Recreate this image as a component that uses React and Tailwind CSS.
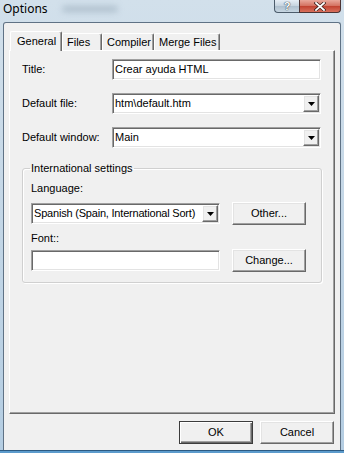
const sunken =
  "bg-white border border-t-[#a0a0a0] border-l-[#a0a0a0] border-r-white border-b-white shadow-[inset_1px_1px_0_#696969,inset_-1px_-1px_0_#e3e3e3]";
const raised =
  "bg-[#f0f0f0] border border-t-white border-l-white border-r-[#696969] border-b-[#696969] shadow-[inset_-1px_-1px_0_#a0a0a0,inset_1px_1px_0_#e3e3e3]";

const DropButton = () => (
  <div className={`${raised} w-[16px] h-full flex items-center justify-center shrink-0`}>
    <svg width="7" height="4" viewBox="0 0 7 4">
      <polygon points="0,0 7,0 3.5,4" fill="#000" />
    </svg>
  </div>
);

const Combo = ({ value, className = "" }) => (
  <div className={`${sunken} h-[21px] p-[1px] flex items-center ${className}`}>
    <span className="flex-1 min-w-0 whitespace-nowrap overflow-hidden pl-[1px]">
      {value}
    </span>
    <DropButton />
  </div>
);

const TextBox = ({ value = "", className = "" }) => (
  <div className={`${sunken} h-[21px] p-[1px] pl-[2px] flex items-center ${className}`}>
    {value}
  </div>
);

const Button = ({ children, isDefault = false }) => (
  <div
    className={`w-[74px] h-[23px] flex items-center justify-center ${
      isDefault
        ? "bg-[#f0f0f0] border border-[#3c3c3c] shadow-[inset_1px_1px_0_#fff,inset_-1px_-1px_0_#696969,inset_-2px_-2px_0_#a0a0a0]"
        : raised
    }`}
  >
    {children}
  </div>
);

const Row = ({ label, children }) => (
  <div className="flex items-center h-[21px]">
    <div className="w-[90px]">{label}</div>
    {children}
  </div>
);

export default function App() {
  const tabs = [
    { name: "Files", w: "w-[40px]" },
    { name: "Compiler", w: "w-[52px]" },
    { name: "Merge Files", w: "w-[66px]" },
  ];

  return (
    <div className="w-[344px] h-[453px] flex flex-col overflow-hidden bg-[linear-gradient(to_bottom,#d2e0eb,#c6d8e7_40%,#b4cde2)] text-[11px] leading-[13px] text-black font-['Liberation_Sans',Arial,sans-serif]">
      {/* title bar */}
      <div className="h-[22px] flex items-start justify-between pl-[3px] pr-[3px] shrink-0">
        <div className="flex items-center h-[17px] gap-[14px]">
          <span className="text-[12px] font-['Noto_Sans',sans-serif] leading-[16px]">
            Options
          </span>
          <span className="w-[56px] h-[6px] rounded-full bg-[#9fb1c0] blur-[3px] opacity-70" />
        </div>
        <div className="flex h-[13px]">
          <div className="w-[25px] h-full border border-r-0 border-t-0 border-[#4c5c6b] rounded-bl-[4px] bg-[linear-gradient(to_bottom,#e6eef5,#c5d3de_50%,#aebfcd_51%,#c7d6e2)] flex items-center justify-center">
            <span className="text-[11px] leading-[11px] font-bold text-white [text-shadow:0_0_1px_#243444,0_0_1px_#243444]">
              ?
            </span>
          </div>
          <div className="w-[42px] h-full border border-t-0 border-[#4c3434] rounded-br-[4px] bg-[linear-gradient(to_bottom,#e9a89b,#d3705f_50%,#c0412f_51%,#d9705c)] flex items-center justify-center">
            <svg width="12" height="9" viewBox="0 0 12 9">
              <path d="M2 1 L10 8 M10 1 L2 8" stroke="#3b1f1a" strokeWidth="3.2" strokeLinecap="square" />
              <path d="M2 1 L10 8 M10 1 L2 8" stroke="#fff" strokeWidth="1.8" strokeLinecap="square" />
            </svg>
          </div>
        </div>
      </div>

      {/* client area */}
      <div className="flex-1 mx-[3px] bg-[#f0f0f0] border border-b-0 border-[#5f7285] rounded-t-[3px] flex flex-col">
        {/* tabs */}
        <div className="mt-[8px] pl-[6px] h-[19px] flex items-end">
          <div className="relative z-10 -mb-px h-[20px] w-[52px] pl-[6px] bg-[#f0f0f0] border border-b-0 border-t-white border-l-white border-r-[#696969] rounded-t-[2px] shadow-[inset_-1px_0_0_#a0a0a0] flex items-center">
            General
          </div>
          {tabs.map((t) => (
            <div
              key={t.name}
              className={`${t.w} h-[17px] pl-[4px] bg-[#f0f0f0] border border-b-0 border-t-white border-l-white border-r-[#696969] rounded-t-[2px] shadow-[inset_-1px_0_0_#a0a0a0] flex items-center`}
            >
              {t.name}
            </div>
          ))}
        </div>

        {/* tab panel */}
        <div className="ml-[5px] w-[326px] h-[364px] bg-[#f0f0f0] border border-t-white border-l-white border-r-[#696969] border-b-[#696969] shadow-[inset_-1px_-1px_0_#a0a0a0] pt-[8px] pl-[12px] flex flex-col gap-[13px]">
          <Row label="Title:">
            <TextBox value="Crear ayuda HTML" className="w-[209px]" />
          </Row>
          <Row label="Default file:">
            <Combo value="htm\default.htm" className="w-[209px]" />
          </Row>
          <Row label="Default window:">
            <Combo value="Main" className="w-[209px]" />
          </Row>

          <fieldset className="mt-[1px] w-[300px] border border-[#d0d0d0] rounded-[3px] shadow-[inset_1px_1px_0_#fff,1px_1px_0_#fff] pl-[8px] pb-[10px]">
            <legend className="-ml-[1px] px-[1px]">International settings</legend>
            <div className="mt-[7px]">Language:</div>
            <div className="mt-[7px] flex items-center h-[23px] gap-[12px]">
              <Combo
                value="Spanish (Spain, International Sort)"
                className="w-[189px] tracking-[-0.2px]"
              />
              <Button>Other...</Button>
            </div>
            <div className="mt-[7px]">Font::</div>
            <div className="mt-[4px] flex items-center h-[23px] gap-[12px]">
              <TextBox className="w-[189px]" />
              <Button>Change...</Button>
            </div>
          </fieldset>
        </div>

        {/* dialog buttons */}
        <div className="mt-[7px] pr-[6px] flex justify-end gap-[7px]">
          <Button isDefault>OK</Button>
          <Button>Cancel</Button>
        </div>
      </div>

      {/* bottom frame */}
      <div className="h-[3px] shrink-0 bg-[#5c9bcc] border-t border-[#2c5a82]" />
    </div>
  );
}
